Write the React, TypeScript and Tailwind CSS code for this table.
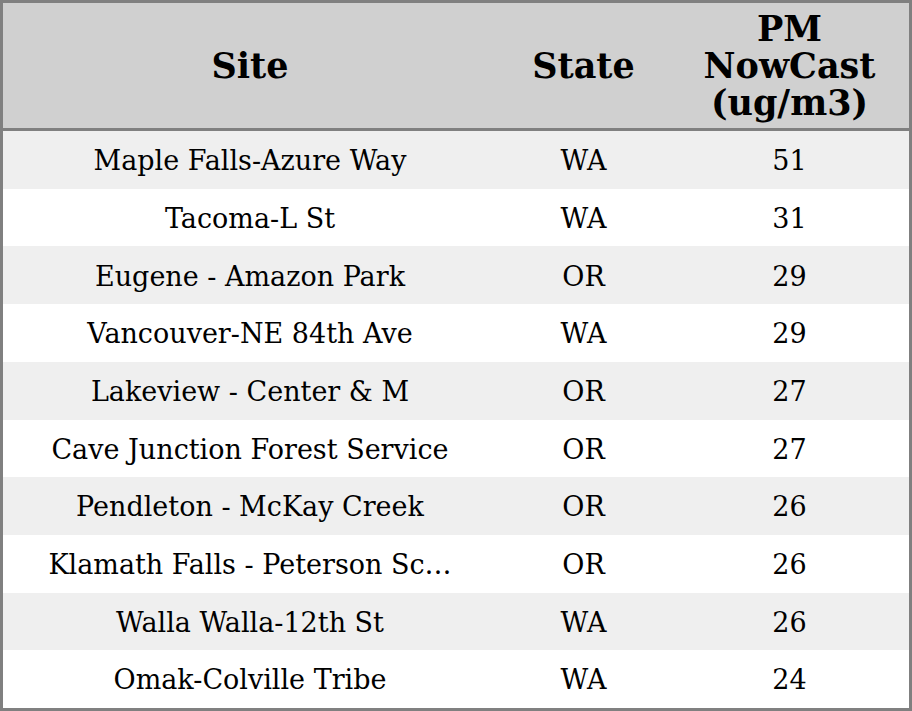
const rows = [
  { site: "Maple Falls-Azure Way", state: "WA", pm: "51" },
  { site: "Tacoma-L St", state: "WA", pm: "31" },
  { site: "Eugene - Amazon Park", state: "OR", pm: "29" },
  { site: "Vancouver-NE 84th Ave", state: "WA", pm: "29" },
  { site: "Lakeview - Center & M", state: "OR", pm: "27" },
  { site: "Cave Junction Forest Service", state: "OR", pm: "27" },
  { site: "Pendleton - McKay Creek", state: "OR", pm: "26" },
  { site: "Klamath Falls - Peterson Sc…", state: "OR", pm: "26" },
  { site: "Walla Walla-12th St", state: "WA", pm: "26" },
  { site: "Omak-Colville Tribe", state: "WA", pm: "24" },
];

export default function App() {
  return (
    <div className="w-[912px] h-[711px] border-[3px] border-[#808080] bg-white text-black font-['DejaVu_Serif',serif] flex flex-col">
      {/* header */}
      <div className="grid grid-cols-[494px_173px_1fr] h-[128px] bg-[#d0d0d0] border-b-[3px] border-[#808080] font-bold text-[35px] leading-[37px] text-center">
        <div className="flex items-center justify-center">Site</div>
        <div className="flex items-center justify-center">State</div>
        <div className="flex items-center justify-center">
          PM
          <br />
          NowCast
          <br />
          (ug/m3)
        </div>
      </div>

      {/* body */}
      <div className="flex-1 flex flex-col">
        {rows.map((r, i) => (
          <div
            key={i}
            className={`flex-1 grid grid-cols-[494px_173px_1fr] items-center text-center text-[27px] pt-[3px] ${i % 2 === 0 ? "bg-[#efefef]" : "bg-white"}`}
          >
            <div className="whitespace-nowrap">{r.site}</div>
            <div>{r.state}</div>
            <div>{r.pm}</div>
          </div>
        ))}
      </div>
    </div>
  );
}
